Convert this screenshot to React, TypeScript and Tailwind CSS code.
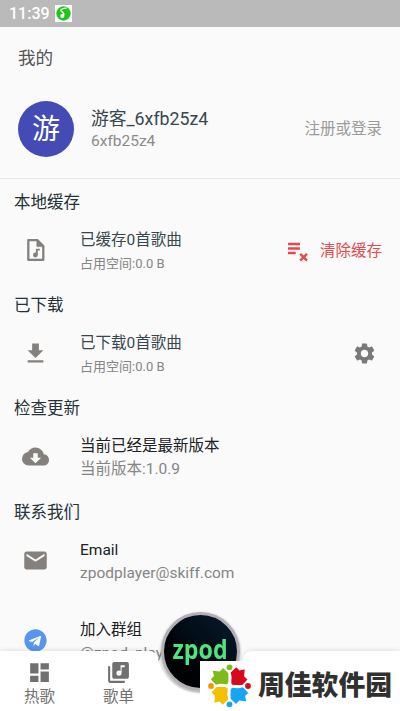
import type { ReactNode } from "react";
import {
  MdCloudDownload,
  MdDashboard,
  MdFileDownload,
  MdLibraryMusic,
  MdMail,
  MdSettings,
} from "react-icons/md";
import { FaTelegram } from "react-icons/fa";

type Row = {
  icon: ReactNode;
  title: string;
  note: string;
  small?: boolean;
  dark?: boolean;
  action?: ReactNode;
};

function MusicFileIcon() {
  return (
    <svg viewBox="0 0 26 26" className="mb-px size-[26px]" fill="none" stroke="currentColor">
      <path d="M5.3 3.2H14.3L20.3 9V22.8H5.3Z" strokeWidth="2.3" strokeLinejoin="round" />
      <path d="M13.8 3.2V9.6H20.3Z" fill="currentColor" strokeWidth="0.6" />
      <path d="M13.8 18V12.6H16.9" strokeWidth="1.9" />
      <circle cx="12.4" cy="18" r="2.4" fill="currentColor" stroke="none" />
    </svg>
  );
}

function PlaylistRemoveIcon() {
  return (
    <svg viewBox="0 0 26 26" className="mr-[9px] mb-1 size-[26px]" fill="none" stroke="currentColor">
      <path d="M3 7H15M3 11.5H15M3 16H10.7" strokeWidth="2.3" />
      <path d="M15.2 16.8L22 23.6M22 16.8L15.2 23.6" strokeWidth="2.4" />
    </svg>
  );
}

const sections: { heading: string; row: Row }[] = [
  {
    heading: "本地缓存",
    row: {
      icon: <MusicFileIcon />,
      title: "已缓存0首歌曲",
      note: "占用空间:0.0 B",
      small: true,
      action: (
        <button className="mr-[18px] flex items-center text-[15.5px] text-[#e5484d]">
          <PlaylistRemoveIcon />
          清除缓存
        </button>
      ),
    },
  },
  {
    heading: "已下载",
    row: {
      icon: <MdFileDownload size={27} />,
      title: "已下载0首歌曲",
      note: "占用空间:0.0 B",
      small: true,
      action: <MdSettings size={25} className="mr-[23px] mb-[3px] text-[#7b7977]" />,
    },
  },
  {
    heading: "检查更新",
    row: {
      icon: <MdCloudDownload size={27} />,
      title: "当前已经是最新版本",
      note: "当前版本:1.0.9",
      dark: true,
    },
  },
  {
    heading: "联系我们",
    row: {
      icon: <MdMail size={27} />,
      title: "Email",
      note: "zpodplayer@skiff.com",
      dark: true,
    },
  },
];

function ListRow({ icon, title, note, small, dark, action }: Row) {
  return (
    <div className="flex h-[58px] items-center">
      <div className="flex w-[71px] shrink-0 justify-center pb-[3px] text-[#84807d]">{icon}</div>
      <div className="ml-[9px] flex-1">
        <p className={`text-[15.5px] leading-[23px] ${dark ? "text-[#202124]" : "text-[#37474f]"}`}>
          {title}
        </p>
        <p className={`leading-[23px] text-[#858585] ${small ? "text-[13px]" : "text-[15.5px]"}`}>
          {note}
        </p>
      </div>
      {action}
    </div>
  );
}

function StatusBar() {
  return (
    <div className="flex h-[27px] items-center bg-[#bababa] pl-[9px]">
      <span className="text-[16px] font-medium text-white">11:39</span>
      <svg viewBox="0 0 17 17" className="ml-[5px] size-[17px]">
        <rect width="17" height="17" fill="#fff" />
        <circle cx="8.5" cy="8.5" r="7.2" fill="#1fc51f" />
        <path
          d="M11.5 3.2C8 3.2 5 4.4 6 5.9c.8 1 3.4 1.3 2.8 4.6"
          fill="none"
          stroke="#fff"
          strokeWidth="1.3"
        />
        <circle cx="7.3" cy="11" r="2.1" fill="#fff" />
      </svg>
    </div>
  );
}

function Profile() {
  return (
    <div className="flex h-[89px] items-center border-b border-[#e6e6e6] pl-[18px] pr-[18px] pb-[10px]">
      <div className="flex size-14 items-center justify-center rounded-full bg-[#454bb5] text-[28px] leading-none text-white">
        <span className="mt-0.5">游</span>
      </div>
      <div className="ml-[17px] flex-1 pt-[2px]">
        <p className="text-[17.8px] leading-[23px] text-[#37474f]">游客_6xfb25z4</p>
        <p className="text-[15.5px] leading-[23px] text-[#8b8b8b]">6xfb25z4</p>
      </div>
      <span className="pt-[2px] text-[15.5px] text-[#9b9b9b]">注册或登录</span>
    </div>
  );
}

function NavBar() {
  return (
    <nav className="absolute inset-x-0 bottom-0 h-[60px] text-[#707070]">
      {/* bar surface with the notch cut out for the play button */}
      <svg
        viewBox="0 0 400 60"
        className="absolute inset-0 size-full overflow-visible drop-shadow-[0_-1px_2px_rgba(0,0,0,0.1)]"
      >
        <path d="M0 0H149Q156 0 158 8A43.5 43.5 0 0 0 243 8Q245 0 252 0H400V60H0Z" fill="#fff" />
      </svg>
      <div className="relative flex pt-[9px]">
        <div className="flex w-[79px] flex-col items-center">
          <MdDashboard size={25} />
          <span className="pt-px text-[15.5px] leading-[23px]">热歌</span>
        </div>
        <div className="flex w-[79px] flex-col items-center">
          <MdLibraryMusic size={25} />
          <span className="pt-px text-[15.5px] leading-[23px]">歌单</span>
        </div>
      </div>
      <button className="absolute left-[161px] -top-[39px] flex size-[79px] items-center justify-center rounded-full border-[3px] border-[#b2afb5] bg-linear-to-bl from-[#061c2d] via-[#020b14] to-black font-['Open_Sans'] text-[27px] font-bold text-[#4fe381] shadow-[0_1px_3px_rgba(0,0,0,0.35)]">
        <span className="-mt-1 scale-x-[0.86]">zpod</span>
      </button>
    </nav>
  );
}

const petals = [
  { color: "#7fba1b", turn: "rotate(0 29.5 25)" },
  { color: "#d7091b", turn: "rotate(90 29.5 25)" },
  { color: "#16a5f5", turn: "rotate(180 29.5 25)" },
  { color: "#f5c000", turn: "rotate(270 29.5 25)" },
];

const dots = [
  { x: 29.5, y: 6.3, color: "#7fba1b" },
  { x: 48, y: 25, color: "#d7091b" },
  { x: 29.5, y: 43.3, color: "#16a5f5" },
  { x: 11, y: 25, color: "#f29b00" },
];

function Watermark() {
  return (
    <div className="absolute bottom-0 right-0 flex h-[50px] w-[200px] items-center bg-white">
      <svg viewBox="0 0 58 50" className="h-[50px] w-[58px] shrink-0">
        {petals.map((petal) => (
          <path
            key={petal.color}
            d="M28.4 12.2L23 7L19.8 10.4L12.8 9.8L13.9 14.9L10.8 18.3L16 23.8Q20.5 22.2 26 23.2Q28.2 23.4 28.4 20.5Z"
            fill={petal.color}
            transform={petal.turn}
          />
        ))}
        {dots.map((dot) => (
          <circle key={dot.color} cx={dot.x} cy={dot.y} r="2.9" fill={dot.color} />
        ))}
      </svg>
      <span className="pt-px text-[26.8px] font-black leading-none whitespace-nowrap text-[#303030]">
        周佳软件园
      </span>
    </div>
  );
}

export default function App() {
  return (
    <div className="relative h-[711px] w-[400px] overflow-hidden bg-[#fafafa] font-[Roboto,'Noto_Sans_CJK_SC',sans-serif]">
      <StatusBar />
      <h1 className="flex h-[63px] items-center pl-[18px] text-[17.6px] text-[#555]">我的</h1>
      <Profile />
      {sections.map(({ heading, row }) => (
        <section key={heading} className="h-[103.2px] pt-[12px]">
          <h2 className="pl-[14px] text-[16.5px] leading-[24px] text-[#263238]">{heading}</h2>
          <div className="pt-[8px]">
            <ListRow {...row} />
          </div>
        </section>
      ))}
      <div className="pt-[21px]">
        <ListRow
          icon={<FaTelegram size={23} className="text-[#5796ec]" />}
          title="加入群组"
          note="@zpod_player"
          dark
        />
      </div>
      <NavBar />
      <Watermark />
    </div>
  );
}
